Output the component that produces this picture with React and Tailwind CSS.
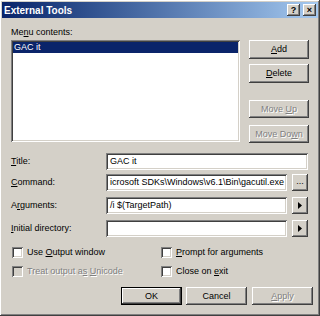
import React from "react";

const raised =
  "bg-[#d4d0c8] shadow-[inset_-1px_-1px_#404040,inset_1px_1px_#ffffff,inset_-2px_-2px_#808080,inset_2px_2px_#d4d0c8]";
const sunken =
  "shadow-[inset_1px_1px_#808080,inset_-1px_-1px_#ffffff,inset_2px_2px_#404040,inset_-2px_-2px_#d4d0c8]";
const disabledText = "text-[#808080] [text-shadow:1px_1px_0_#ffffff]";

const U = ({ children }) => <span className="underline underline-offset-[1px]">{children}</span>;

const Button = ({ children, disabled, className = "" }) => (
  <div className={`${raised} flex items-center justify-center ${disabled ? disabledText : "text-black"} ${className}`}>
    <span>{children}</span>
  </div>
);

const Field = ({ children, className = "" }) => (
  <div className={`${sunken} bg-white h-[17px] flex items-center overflow-hidden px-[4px] whitespace-nowrap ${className}`}>
    {children}
  </div>
);

const Arrow = () => (
  <Button className="w-[16px] h-[17px]">
    <svg width="4" height="7" viewBox="0 0 4 7" className="block">
      <polygon points="0,0 4,3.5 0,7" fill="#000" />
    </svg>
  </Button>
);

const Check = ({ label, disabled }) => (
  <div className="flex items-center h-[11px]">
    <div className={`${sunken} w-[11px] h-[11px] ${disabled ? "bg-[#d4d0c8]" : "bg-white"}`} />
    <span className={`ml-[4px] ${disabled ? disabledText : ""}`}>{label}</span>
  </div>
);

export default function App() {
  return (
    <div className="w-[320px] h-[316px] bg-[#d4d0c8] p-[2px] flex flex-col text-black text-[9px] leading-[11px] font-['Liberation_Sans',Arial,sans-serif] shadow-[inset_-1px_-1px_#404040,inset_1px_1px_#ffffff,inset_-2px_-2px_#808080]">
      {/* title bar */}
      <div className="h-[16px] flex items-center bg-gradient-to-r from-[#0a246a] to-[#a6caf0] pl-[2px] pr-[2px]">
        <span className="text-white font-bold text-[10px]">External Tools</span>
        <div className="ml-auto flex gap-[3px]">
          <Button className="w-[13px] h-[12px] font-bold text-[9px]">?</Button>
          <Button className="w-[13px] h-[12px] font-bold text-[9px]">×</Button>
        </div>
      </div>

      <div className="pl-[9px] flex flex-col">
        <div className="mt-[9px]">
          Me<U>n</U>u contents:
        </div>

        <div className="mt-[2px] flex">
          <div className={`${sunken} bg-white w-[229px] h-[102px] p-[2px]`}>
            <div className="bg-[#0a246a] text-white h-[11px] pl-[1px]">GAC it</div>
          </div>
          <div className="ml-[9px] w-[60px] flex flex-col">
            <Button className="h-[19px]">
              <U>A</U>dd
            </Button>
            <Button className="h-[19px] mt-[5px]">
              <U>D</U>elete
            </Button>
            <Button disabled className="h-[18px] mt-[17px]">
              Move <U>U</U>p
            </Button>
            <Button disabled className="h-[18px] mt-[7px]">
              Move Do<U>w</U>n
            </Button>
          </div>
        </div>

        {/* form rows */}
        <div className="mt-[10px] flex items-center h-[17px]">
          <div className="w-[95px]">
            <U>T</U>itle:
          </div>
          <Field className="w-[202px]">GAC it</Field>
        </div>
        <div className="mt-[4px] flex items-center h-[17px]">
          <div className="w-[95px]">
            <U>C</U>ommand:
          </div>
          <Field className="w-[181px]">icrosoft SDKs\Windows\v6.1\Bin\gacutil.exe</Field>
          <Button className="w-[16px] h-[17px] ml-[5px] pb-[3px]">...</Button>
        </div>
        <div className="mt-[6px] flex items-center h-[17px]">
          <div className="w-[95px]">
            A<U>r</U>guments:
          </div>
          <Field className="w-[181px]">/i $(TargetPath)</Field>
          <div className="ml-[5px]">
            <Arrow />
          </div>
        </div>
        <div className="mt-[6px] flex items-center h-[17px]">
          <div className="w-[95px]">
            <U>I</U>nitial directory:
          </div>
          <Field className="w-[181px]"></Field>
          <div className="ml-[5px]">
            <Arrow />
          </div>
        </div>

        {/* checkboxes */}
        <div className="mt-[10px] flex">
          <div className="w-[150px] pl-[1px]">
            <Check label={<>Use <U>O</U>utput window</>} />
          </div>
          <Check label={<><U>P</U>rompt for arguments</>} />
        </div>
        <div className="mt-[8px] flex">
          <div className="w-[150px] pl-[1px]">
            <Check disabled label={<>Treat output a<U>s</U> <U>U</U>nicode</>} />
          </div>
          <Check label={<>Close on <U>e</U>xit</>} />
        </div>

        {/* dialog buttons */}
        <div className="mt-[10px] ml-[110px] flex">
          <div className="w-[61px] h-[18px] border border-black">
            <Button className="w-full h-full">OK</Button>
          </div>
          <Button className="w-[61px] h-[18px] ml-[4px]">Cancel</Button>
          <Button disabled className="w-[61px] h-[18px] ml-[5px]">
            <U>A</U>pply
          </Button>
        </div>
      </div>
    </div>
  );
}
